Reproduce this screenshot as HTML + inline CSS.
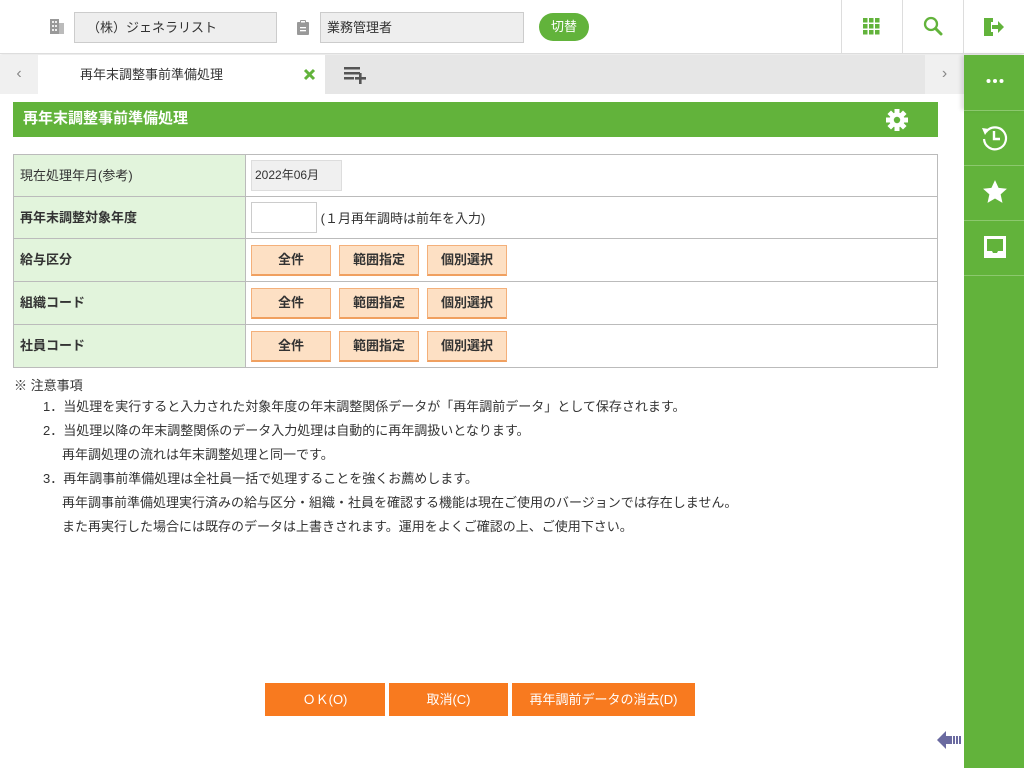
<!DOCTYPE html>
<html><head><meta charset="utf-8"><style>
*{margin:0;padding:0;box-sizing:border-box}
body{width:1024px;height:768px;position:relative;overflow:hidden;background:#fff;font-family:"Liberation Sans","Noto Sans CJK JP",sans-serif;font-size:13px;color:#333}
.abs{position:absolute}
.hdr{left:0;top:0;width:1024px;height:54px;background:#fff;border-bottom:1px solid #ddd;box-shadow:0 1px 3px rgba(0,0,0,.12)}
.inp{background:#eee;border:1px solid #ccc;height:31px;top:12px;font-size:13px;line-height:29px;color:#333}
.vd{top:0;width:1px;height:54px;background:#ddd}
.tabbar{left:0;top:55px;width:964px;height:39px;background:#e6e6e6}
.side{left:964px;top:55px;width:60px;height:713px;background:#62b33b}
.sl{left:964px;width:60px;height:1px;background:#8cc86e}
.title{left:13px;top:102px;width:925px;height:35px;background:#62b33b;color:#fff;font-weight:bold;font-size:15px;line-height:33px;padding-left:10px}
table{position:absolute;left:13px;top:154px;width:925px;border-collapse:collapse}
td{border:1px solid #bbb;font-size:13px}
td.l{width:232px;background:#e2f4dc;padding-left:6px;font-weight:bold;color:#333;vertical-align:top;padding-top:10px}
td.r{padding-left:5px}
.b{display:inline-block;height:31px;background:#fde0c4;border:1px solid #f4b07a;border-bottom:2px solid #f0a060;font-weight:bold;font-size:13px;line-height:28px;text-align:center;margin-right:8px;vertical-align:middle;width:80px}
.ob{top:683px;height:33px;background:#f87a1f;color:#fff;font-size:13px;line-height:33px;text-align:center}
.n{position:absolute;font-size:13px;white-space:nowrap;color:#333}
</style></head><body>
<div class="abs hdr"></div>
<svg class="abs" style="left:49px;top:18px" width="16" height="17" viewBox="0 0 16 17"><rect x="1" y="1" width="9" height="15" fill="#999"/><rect x="10" y="5" width="5" height="11" fill="#bbb"/><g fill="#eee"><rect x="3" y="3" width="2" height="2"/><rect x="6" y="3" width="2" height="2"/><rect x="3" y="7" width="2" height="2"/><rect x="6" y="7" width="2" height="2"/><rect x="3" y="11" width="2" height="2"/><rect x="6" y="11" width="2" height="2"/></g></svg>
<div class="abs inp" style="left:74px;width:203px;padding-left:12px">（株）ジェネラリスト</div>
<svg class="abs" style="left:296px;top:19px" width="14" height="16" viewBox="0 0 14 16"><rect x="1" y="3" width="12" height="13" rx="1" fill="#999"/><rect x="4" y="1" width="6" height="4" rx="1" fill="#999"/><rect x="5" y="2" width="4" height="1.5" fill="#fff"/><rect x="4" y="8" width="6" height="1.3" fill="#fff"/><rect x="4" y="11" width="6" height="1.3" fill="#fff"/></svg>
<div class="abs inp" style="left:320px;width:204px;padding-left:6px">業務管理者</div>
<div class="abs" style="left:539px;top:13px;width:50px;height:28px;border-radius:14px;background:#62b33b;color:#fff;font-size:13px;line-height:28px;text-align:center">切替</div>
<div class="abs vd" style="left:841px"></div><div class="abs vd" style="left:902px"></div><div class="abs vd" style="left:963px"></div>
<svg class="abs" style="left:863px;top:18px" width="17" height="17"><g fill="#62b33b"><rect x="0" y="0" width="4.5" height="4.5"/><rect x="6" y="0" width="4.5" height="4.5"/><rect x="12" y="0" width="4.5" height="4.5"/><rect x="0" y="6" width="4.5" height="4.5"/><rect x="6" y="6" width="4.5" height="4.5"/><rect x="12" y="6" width="4.5" height="4.5"/><rect x="0" y="12" width="4.5" height="4.5"/><rect x="6" y="12" width="4.5" height="4.5"/><rect x="12" y="12" width="4.5" height="4.5"/></g></svg>
<svg class="abs" style="left:923px;top:16px" width="20" height="20"><circle cx="8" cy="8" r="6" fill="none" stroke="#62b33b" stroke-width="2.3"/><line x1="12.5" y1="12.5" x2="18" y2="18" stroke="#62b33b" stroke-width="3" stroke-linecap="round"/></svg>
<svg class="abs" style="left:983px;top:16px" width="22" height="22" viewBox="0 0 22 22"><path d="M1 2h9v4H8V4H4v14h4v-2h2v4H1z" fill="#62b33b"/><path d="M1 2l7 2v16l-7-2z" fill="#62b33b"/><path d="M9 9h6V5l6 6-6 6v-4H9z" fill="#62b33b"/></svg>
<div class="abs tabbar"></div>
<div class="abs" style="left:0;top:55px;width:38px;height:39px;background:#f0f0f0;color:#888;font-size:16px;line-height:38px;text-align:center">&lsaquo;</div>
<div class="abs" style="left:38px;top:55px;width:287px;height:39px;background:#fff;font-size:13px;line-height:39px;padding-left:42px">再年末調整事前準備処理</div>
<svg class="abs" style="left:303px;top:68px" width="13" height="13"><path d="M2 2L11 11M11 2L2 11" stroke="#62b33b" stroke-width="3"/></svg>
<svg class="abs" style="left:344px;top:66px" width="24" height="18"><g fill="#555"><rect x="0" y="1" width="16" height="2.5"/><rect x="0" y="6" width="16" height="2.5"/><rect x="0" y="11" width="10" height="2.5"/><rect x="15" y="7" width="2.6" height="11"/><rect x="11" y="11" width="11" height="2.6"/></g></svg>
<div class="abs" style="left:925px;top:55px;width:39px;height:39px;background:#f0f0f0;color:#888;font-size:16px;line-height:38px;text-align:center">&rsaquo;</div>
<div class="abs side"></div>
<div class="abs" style="left:964px;top:55px;width:60px;height:55px;box-shadow:-3px 0 4px rgba(0,0,0,.12)"></div>
<div class="abs sl" style="top:110px"></div><div class="abs sl" style="top:165px"></div><div class="abs sl" style="top:220px"></div><div class="abs sl" style="top:275px"></div>
<svg class="abs" style="left:986px;top:78px" width="18" height="6"><circle cx="2.5" cy="3" r="2" fill="#fff"/><circle cx="9" cy="3" r="2" fill="#fff"/><circle cx="15.5" cy="3" r="2" fill="#fff"/></svg>
<svg class="abs" style="left:980px;top:123px" width="30" height="30" viewBox="0 0 30 30"><path d="M6 9A11 11 0 1 1 4 16" fill="none" stroke="#fff" stroke-width="2.2"/><path d="M2 5l7 1-4 6z" fill="#fff"/><path d="M14 8v8h6" fill="none" stroke="#fff" stroke-width="2.4"/></svg>
<svg class="abs" style="left:982px;top:179px" width="26" height="26" viewBox="0 0 24 24"><path d="M12 1l3.3 7.2 7.7.8-5.8 5.2 1.7 7.8L12 18l-6.9 4 1.7-7.8L1 9l7.7-.8z" fill="#fff"/></svg>
<svg class="abs" style="left:982px;top:234px" width="26" height="26" viewBox="0 0 26 26"><path d="M2 2h22v22H2z" fill="#fff"/><path d="M5 5h16v12h-5l-1 2h-4l-1-2H5z" fill="#62b33b"/></svg>
<div class="abs title">再年末調整事前準備処理</div>
<svg class="abs" style="left:885px;top:108px" width="24" height="24" viewBox="0 0 24 24"><g fill="#fff"><circle cx="12" cy="12" r="7.5"/><g><rect x="9.5" y="1" width="5" height="5"/><rect x="9.5" y="18" width="5" height="5"/><rect x="1" y="9.5" width="5" height="5"/><rect x="18" y="9.5" width="5" height="5"/></g><g transform="rotate(45 12 12)"><rect x="9.5" y="1" width="5" height="5"/><rect x="9.5" y="18" width="5" height="5"/><rect x="1" y="9.5" width="5" height="5"/><rect x="18" y="9.5" width="5" height="5"/></g></g><circle cx="12" cy="12" r="3.2" fill="#62b33b"/></svg>
<table>
<tr style="height:42px"><td class="l" style="font-weight:normal">現在処理年月(参考)</td><td class="r"><span style="display:inline-block;width:91px;height:31px;background:#f0f0f0;border:1px solid #ddd;line-height:29px;padding-left:3px;font-size:12px">2022年06月</span></td></tr>
<tr style="height:42px"><td class="l">再年末調整対象年度</td><td class="r"><span style="display:inline-block;width:66px;height:31px;border:1px solid #ccc;vertical-align:middle"></span> <span style="vertical-align:middle">(１月再年調時は前年を入力)</span></td></tr>
<tr style="height:43px"><td class="l">給与区分</td><td class="r"><span class="b">全件</span><span class="b">範囲指定</span><span class="b">個別選択</span></td></tr>
<tr style="height:43px"><td class="l">組織コード</td><td class="r"><span class="b">全件</span><span class="b">範囲指定</span><span class="b">個別選択</span></td></tr>
<tr style="height:43px"><td class="l">社員コード</td><td class="r"><span class="b">全件</span><span class="b">範囲指定</span><span class="b">個別選択</span></td></tr>
</table>
<div class="n" style="left:14px;top:375px">※ 注意事項</div>
<div class="n" style="left:43px;top:396px">1．当処理を実行すると入力された対象年度の年末調整関係データが「再年調前データ」として保存されます。</div>
<div class="n" style="left:43px;top:420px">2．当処理以降の年末調整関係のデータ入力処理は自動的に再年調扱いとなります。</div>
<div class="n" style="left:62px;top:444px">再年調処理の流れは年末調整処理と同一です。</div>
<div class="n" style="left:43px;top:468px">3．再年調事前準備処理は全社員一括で処理することを強くお薦めします。</div>
<div class="n" style="left:62px;top:492px">再年調事前準備処理実行済みの給与区分・組織・社員を確認する機能は現在ご使用のバージョンでは存在しません。</div>
<div class="n" style="left:62px;top:516px">また再実行した場合には既存のデータは上書きされます。運用をよくご確認の上、ご使用下さい。</div>
<div class="abs ob" style="left:265px;width:120px">ＯＫ(O)</div>
<div class="abs ob" style="left:389px;width:119px">取消(C)</div>
<div class="abs ob" style="left:512px;width:183px">再年調前データの消去(D)</div>
<svg class="abs" style="left:937px;top:730px" width="26" height="20"><path d="M0 10L9 1v5h6v8H9v5z" fill="#6a6aa0"/><rect x="16" y="6" width="2" height="8" fill="#6a6aa0"/><rect x="19" y="6" width="2" height="8" fill="#6a6aa0"/><rect x="22" y="6" width="2" height="8" fill="#6a6aa0"/></svg>
</body></html>
